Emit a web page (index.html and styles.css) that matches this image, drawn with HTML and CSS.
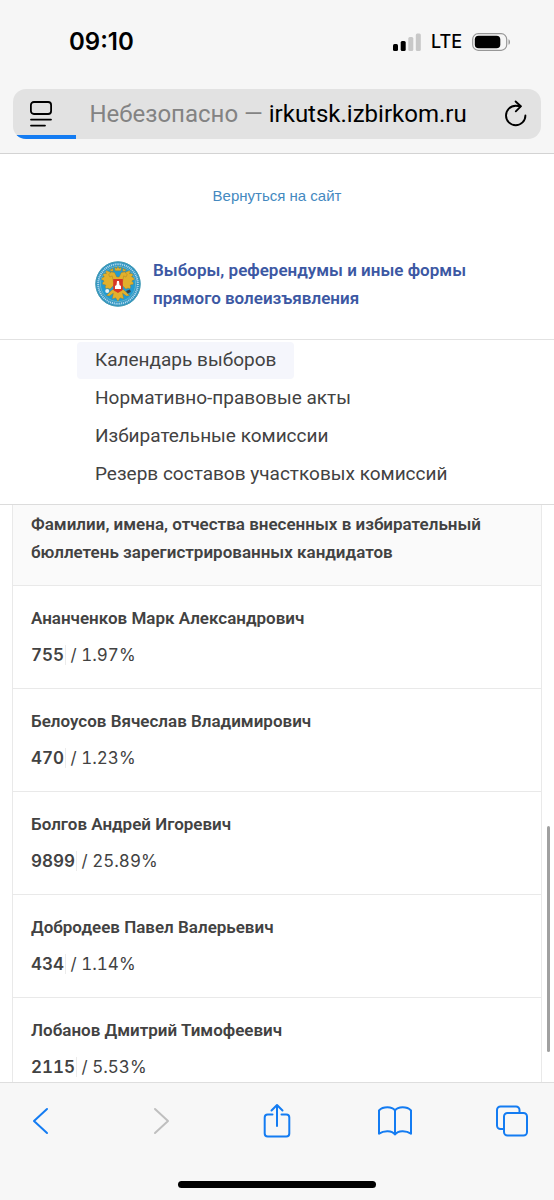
FILE: index.html
```html
<!DOCTYPE html>
<html lang="ru">
<head>
    <meta charset="UTF-8">
    <meta name="viewport" content="width=device-width, initial-scale=1.0">
    <title>Выборы, референдумы и иные формы прямого волеизъявления</title>
    <link rel="stylesheet" href="styles.css">
</head>
<body>

    <!-- Browser top -->
    <div class="browser-top">
        <div class="status-bar">
            <span class="time">09:10</span>
            <div class="status-icons">
                <svg width="28" height="18" viewBox="0 0 28 18">
                    <rect x="0" y="11" width="5" height="7" rx="1.5" fill="#000"/>
                    <rect x="7.7" y="8" width="5" height="10" rx="1.5" fill="#000"/>
                    <rect x="15.3" y="4" width="5" height="14" rx="1.5" fill="#c8c8c8"/>
                    <rect x="22.8" y="0.5" width="5" height="17.5" rx="1.5" fill="#c8c8c8"/>
                </svg>
                <span class="network">LTE</span>
                <svg width="39" height="18" viewBox="0 0 39 18">
                    <rect x="0.7" y="0.7" width="34" height="16.6" rx="5.5" fill="none" stroke="#979797" stroke-width="1.2"/>
                    <rect x="2.8" y="2.8" width="25.5" height="12.4" rx="3.8" fill="#000"/>
                    <path d="M36.5 6.2c2 .8 2 4.800 0 5.600z" fill="#979797"/>
                </svg>
            </div>
        </div>
        <div class="address-bar">
            <button class="icon-button" type="button" aria-label="Меню страницы">
                <svg width="24" height="28" viewBox="0 0 24 28" fill="none" stroke="#000" stroke-width="1.8" stroke-linecap="round">
                    <rect x="1.9" y="2" width="20.200" height="12" rx="3"/>
                    <path d="M2 19.600h20M2 25.600h14"/>
                </svg>
            </button>
            <button class="address" type="button"><span class="insecure">Небезопасно —</span> irkutsk.izbirkom.ru</button>
            <button class="icon-button" type="button" aria-label="Обновить">
                <svg width="24" height="28" viewBox="0 0 24 28" fill="none" stroke="#000" stroke-width="1.900" stroke-linecap="round" stroke-linejoin="round">
                    <path d="M22.400 15.500a9.700 9.700 0 1 1-9.700-9.700c1.900 0 3.500.1 4.900.5"/>
                    <path d="M12.600 1.500l5.200 4.800-5 5"/>
                </svg>
            </button>
            <div class="progress"></div>
        </div>
    </div>

    <!-- Site header -->
    <header class="site-header">
        <a class="back-link" href="#site">Вернуться на сайт</a>
        <div class="brand">
            <svg class="emblem" viewBox="0 0 46 46">
                <circle cx="23" cy="23" r="22.500" fill="#2d93c4"/>
                <circle cx="23" cy="23" r="22.200" fill="none" stroke="#4a9db2" stroke-width="1"/>
                <circle cx="23" cy="23" r="19.800" fill="none" stroke="#b5dcec" stroke-width="2" stroke-dasharray="1.100 .8"/>
                <circle cx="23" cy="23" r="17.600" fill="#239bd2" stroke="#8bc9c9" stroke-width=".6"/>
                <g fill="#e2b02c" stroke="#8d7324" stroke-width=".3" transform="translate(-3.500 -3.500) scale(1.150)">
                    <path d="M20 17c-2-3-4-5-7-5.500-1 1-.5 2 0 2.500-2-.5-3 .4-3.300 1.500 1 .2 1.300.8 1.300 1.500-1.800 0-2.500 1.500-2 2.600 1 0 1.600.4 2 1-1.500.6-1.700 2-1 3 1.200-.3 2 .2 2.500.8-1 1-.6 2.200.3 2.800 1.500-.8 2.600-.4 3.200.3l4-4z"/>
                    <path d="M26 17c2-3 4-5 7-5.500 1 1 .5 2 0 2.500 2-.5 3 .4 3.300 1.500-1 .2-1.300.8-1.300 1.500 1.800 0 2.500 1.500 2 2.600-1 0-1.600.4-2 1 1.500.6 1.700 2 1 3-1.200-.3-2 .2-2.500.8 1 1 .6 2.200-.3 2.800-1.500-.8-2.600-.4-3.200.3l-4-4z"/>
                    <path d="M16 17l-1-2 2-2.500 3 .5 2 4h2l2-4 3-.5 2 2.500-1 2-2-1-1 5h-8l-1-5z"/>
                    <path d="M20.500 11.500l-.5-3 2 1 1-2 1 2 2-1-.5 3zM16.500 12l-.5-2 1.500.5 1-1.500.5 3zM27 12l.5-3 1 1.500L30 10l-.5 2z"/>
                    <path d="M18 28l-5 5 2.500.5L19 31l-1 5 3-1 2 3 2-3 3 1-1-5 3.500 2.500L33 33l-5-5z"/>
                </g>
                <path d="M18.200 18h9.600v9.500c0 2.500-3 3-4.800 4.500-1.800-1.500-4.800-2-4.800-4.500z" fill="#d83625"/>
                <path d="M22 20h2l.5 4 1.500 1v3h-6v-3l1.500-1z" fill="#fff"/>
                <circle cx="12.200" cy="30" r="2" fill="#e9f2f4"/>
                <path d="M31 30l4-1.500.8 2.500-3 1.500z" fill="#30414b"/>
            </svg>
            <a class="brand-title" href="#home">Выборы, референдумы и иные формы прямого волеизъявления</a>
        </div>
    </header>

    <!-- Navigation -->
    <nav>
        <ul>
            <li><a class="active" href="#calendar">Календарь выборов</a></li>
            <li><a href="#acts">Нормативно-правовые акты</a></li>
            <li><a href="#commissions">Избирательные комиссии</a></li>
            <li><a href="#reserve">Резерв составов участковых комиссий</a></li>
        </ul>
    </nav>

    <!-- Results -->
    <main>
        <table>
            <thead>
                <tr><th>Фамилии, имена, отчества внесенных в избирательный бюллетень зарегистрированных кандидатов</th></tr>
            </thead>
            <tbody>
                <tr><td><div class="name">Ананченков Марк Александрович</div><div class="votes"><b>755</b> / 1.97%</div></td></tr>
                <tr><td><div class="name">Белоусов Вячеслав Владимирович</div><div class="votes"><b>470</b> / 1.23%</div></td></tr>
                <tr><td><div class="name">Болгов Андрей Игоревич</div><div class="votes"><b>9899</b> / 25.89%</div></td></tr>
                <tr><td><div class="name">Добродеев Павел Валерьевич</div><div class="votes"><b>434</b> / 1.14%</div></td></tr>
                <tr><td><div class="name">Лобанов Дмитрий Тимофеевич</div><div class="votes"><b>2115</b> / 5.53%</div></td></tr>
            </tbody>
        </table>
        <div class="scroll-thumb"></div>
    </main>

    <!-- Browser toolbar -->
    <footer class="toolbar">
        <div class="tools">
            <button class="icon-button" type="button" aria-label="Назад">
                <svg width="34" height="36" viewBox="0 0 34 36"><path d="M22 6L9 18l13 12"/></svg>
            </button>
            <button class="icon-button forward" type="button" aria-label="Вперёд" disabled>
                <svg width="34" height="36" viewBox="0 0 34 36"><path d="M12 6l13 12-13 12"/></svg>
            </button>
            <button class="icon-button" type="button" aria-label="Поделиться">
                <svg width="34" height="36" viewBox="0 0 34 36"><path d="M12.500 11.500H7.700a3 3 0 0 0-3 3V30.500a3 3 0 0 0 3 3h18.600a3 3 0 0 0 3-3V14.500a3 3 0 0 0-3-3h-4.800M17 23V2.500M11.500 7.500L17 2l5.500 5.500"/></svg>
            </button>
            <button class="icon-button" type="button" aria-label="Закладки">
                <svg width="34" height="36" viewBox="0 0 34 36"><path d="M17 7.500v24c-3-4.200-11-4.200-16-.8V7.500c4-4.200 13-4.200 16 0 3-4.200 12-4.200 16 0v23.200c-5-3.400-13-3.400-16 .8"/></svg>
            </button>
            <button class="icon-button" type="button" aria-label="Вкладки">
                <svg width="34" height="36" viewBox="0 0 34 36"><rect x="9" y="10" width="23" height="22.500" rx="3.500"/><path d="M8.500 26H5.500a3.500 3.500 0 0 1-3.500-3.500V7a3.500 3.500 0 0 1 3.500-3.500h15.500a3.500 3.500 0 0 1 3.500 3.500v2.500"/></svg>
            </button>
        </div>
        <div class="home-indicator"></div>
    </footer>

</body>
</html>
```
FILE: styles.css
```css
* {
    margin: 0;
    padding: 0;
    box-sizing: border-box;
}

body {
    display: flex;
    flex-direction: column;
    height: 100vh;
    overflow: hidden;
    background-color: #fff;
    color: #424242;
    font-family: Roboto, "Liberation Sans", sans-serif;
    font-size: 17px;
    line-height: 28px;
}

a {
    color: inherit;
    text-decoration: none;
}

button {
    border: none;
    background: none;
    font: inherit;
    color: inherit;
}

svg {
    display: block;
}

/* Browser top */
.browser-top {
    flex: none;
    padding: 26px 13px 14px;
    background-color: #f6f6f6;
    border-bottom: 1px solid #d3d3d3;
    color: #000;
    font-family: Inter, sans-serif;
}

.status-bar {
    display: flex;
    justify-content: space-between;
    align-items: center;
    height: 31px;
    padding: 0 30px 0 56px;
}

.time {
    font-size: 24px;
    font-weight: 600;
}

.status-icons {
    display: flex;
    align-items: center;
    gap: 10px;
}

.network {
    font-size: 18px;
    font-weight: 500;
}

.address-bar {
    position: relative;
    display: flex;
    align-items: center;
    justify-content: space-between;
    height: 50px;
    margin-top: 32px;
    padding: 0 14px 0 16px;
    background-color: #e2e2e2;
    border-radius: 13px;
    overflow: hidden;
}

.address {
    font-family: Roboto, sans-serif;
    font-size: 24px;
    white-space: nowrap;
}

.insecure {
    color: #838383;
}

.progress {
    position: absolute;
    left: 0;
    bottom: 0;
    width: 12%;
    height: 4px;
    background-color: #147cf2;
}

/* Site header */
.site-header {
    flex: none;
    padding: 28px 0 27px;
    border-bottom: 1px solid #e2e2e2;
}

.back-link {
    display: block;
    color: #4489bf;
    font-family: "Liberation Sans", Arial, sans-serif;
    font-size: 15px;
    text-align: center;
}

.brand {
    display: flex;
    align-items: center;
    gap: 12px;
    margin-top: 46px;
    padding: 0 77px 0 95px;
}

.emblem {
    flex: none;
    width: 46px;
    height: 46px;
}

.brand-title {
    color: #3c58a3;
    font-weight: 600;
}

/* Navigation */
nav {
    flex: none;
    padding: 2px 77px 10px;
    border-bottom: 1px solid #dcdcdc;
}

nav ul {
    list-style: none;
}

nav li {
    height: 38px;
}

nav a {
    display: inline-block;
    padding: 4px 18px 5px;
    border-radius: 4px;
    font-size: 19px;
}

nav .active {
    background-color: #f5f6fc;
}

/* Results */
main {
    position: relative;
    flex: 1;
    min-height: 0;
    padding: 0 12px;
    overflow: hidden;
}

table {
    width: 100%;
    border-collapse: collapse;
}

th,
td {
    padding: 18px 18px 19px;
    border: 1px solid #e9e9e9;
    text-align: left;
}

th {
    padding-top: 5px;
    border-top: none;
    background-color: #fafafa;
    font-weight: 600;
}

.name {
    margin-bottom: 9px;
    font-weight: 600;
}

.votes {
    font-family: Inter, sans-serif;
    font-variant-numeric: tabular-nums;
}

.votes b {
    padding-right: 1px;
    border-right: 1px solid #ebebeb;
    font-weight: 600;
}

.scroll-thumb {
    position: absolute;
    right: 4px;
    bottom: 30px;
    width: 3px;
    height: 226px;
    border-radius: 2px;
    background-color: #a0a0a0;
}

/* Browser toolbar */
.toolbar {
    flex: none;
    padding: 20px 25px 12px;
    background-color: #f7f7f7;
    border-top: 1px solid #dedede;
}

.tools {
    display: flex;
    justify-content: space-between;
}

.toolbar svg {
    fill: none;
    stroke: #147cf2;
    stroke-width: 2;
    stroke-linecap: round;
    stroke-linejoin: round;
}

.toolbar .forward svg {
    stroke: #bfbfbf;
}

.home-indicator {
    width: 198px;
    height: 7px;
    margin: 42px auto 0;
    border-radius: 4px;
    background-color: #000;
}
```
